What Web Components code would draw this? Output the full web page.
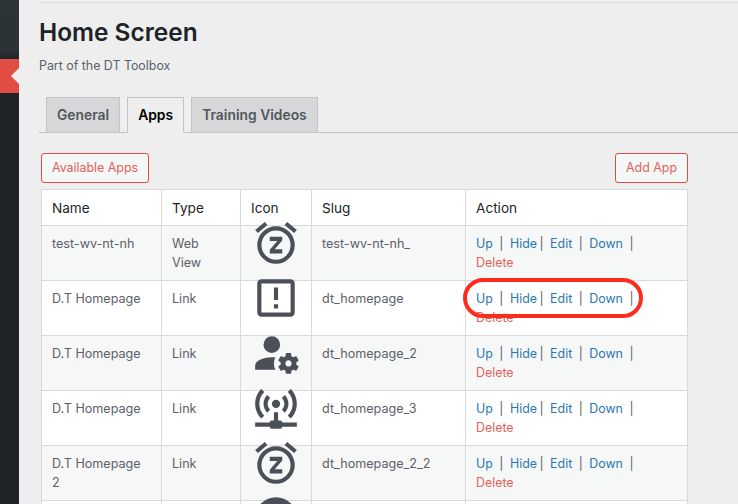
<!DOCTYPE html>
<html>
<head>
<meta charset="utf-8">
<title>Home Screen</title>
<style>
html, body { margin: 0; height: 504px; overflow: hidden; background: #eeeeef; }
body { font-family: Inter, "Liberation Sans", sans-serif; font-size: 12.6px; color: #5b6168; }
</style>
</head>
<body>
<dt-page>
  <dt-sidebar slot="side"></dt-sidebar>
  <dt-heading title="Home Screen" sub="Part of the DT Toolbox"></dt-heading>
  <dt-tabs>
    <dt-tab>General</dt-tab>
    <dt-tab active>Apps</dt-tab>
    <dt-tab>Training Videos</dt-tab>
  </dt-tabs>
  <dt-toolbar>
    <dt-button>Available Apps</dt-button>
    <dt-button>Add App</dt-button>
  </dt-toolbar>
  <dt-table>
    <dt-row header name="Name" type="Type" icon="Icon" slug="Slug"></dt-row>
    <dt-row name="test-wv-nt-nh" type="Web View" icon="alarm" slug="test-wv-nt-nh_"></dt-row>
    <dt-row name="D.T Homepage" type="Link" icon="alert" slug="dt_homepage"></dt-row>
    <dt-row name="D.T Homepage" type="Link" icon="cog" slug="dt_homepage_2"></dt-row>
    <dt-row name="D.T Homepage" type="Link" icon="network" slug="dt_homepage_3"></dt-row>
    <dt-row name="D.T Homepage 2" type="Link" icon="alarm" slug="dt_homepage_2_2"></dt-row>
    <dt-row name="" type="" icon="disc" slug="" blank></dt-row>
  </dt-table>
  <dt-callout></dt-callout>
</dt-page>

<script>
const ICONS = {
  alarm: 'M7.88,3.39L6.6,1.86L2,5.71L3.29,7.24L7.88,3.39M22,5.72L17.4,1.86L16.11,3.39L20.71,7.25L22,5.72M12,4A9,9 0 0,0 3,13A9,9 0 0,0 12,22A9,9 0 0,0 21,13A9,9 0 0,0 12,4M12,20A7,7 0 0,1 5,13A7,7 0 0,1 12,6A7,7 0 0,1 19,13A7,7 0 0,1 12,20M9,11H12.63L9,15.2V17H15V15H11.37L15,10.8V9H9V11Z',
  alert: 'M19,19H5V5H19M19,3H5C3.89,3 3,3.89 3,5V19A2,2 0 0,0 5,21H19A2,2 0 0,0 21,19V5C21,3.89 20.1,3 19,3M11,15H13V17H11V15M11,7H13V13H11V7Z',
  cog: 'M10 4A4 4 0 0 0 6 8A4 4 0 0 0 10 12A4 4 0 0 0 14 8A4 4 0 0 0 10 4M17 12C16.87 12 16.76 12.09 16.74 12.21L16.55 13.53C16.25 13.66 15.96 13.82 15.7 14L14.46 13.5C14.35 13.5 14.22 13.5 14.15 13.63L13.15 15.36C13.09 15.47 13.11 15.6 13.21 15.68L14.27 16.5C14.25 16.67 14.24 16.83 14.24 17C14.24 17.17 14.25 17.33 14.27 17.5L13.21 18.32C13.12 18.4 13.09 18.53 13.15 18.64L14.15 20.37C14.21 20.5 14.34 20.5 14.46 20.5L15.7 20C15.96 20.18 16.24 20.35 16.55 20.47L16.74 21.79C16.76 21.91 16.86 22 17 22H19C19.11 22 19.22 21.91 19.24 21.79L19.43 20.47C19.73 20.34 20 20.18 20.27 20L21.5 20.5C21.63 20.5 21.76 20.5 21.83 20.37L22.83 18.64C22.89 18.53 22.86 18.4 22.77 18.32L21.7 17.5C21.72 17.33 21.74 17.17 21.74 17C21.74 16.83 21.73 16.67 21.7 16.5L22.76 15.68C22.85 15.6 22.88 15.47 22.82 15.36L21.82 13.63C21.76 13.5 21.63 13.5 21.5 13.5L20.27 14C20 13.82 19.73 13.65 19.42 13.53L19.23 12.21C19.22 12.09 19.11 12 19 12H17M10 14C5.58 14 2 15.79 2 18V20H11.68A7 7 0 0 1 11 17A7 7 0 0 1 11.68 14.08C11.13 14.03 10.57 14 10 14M18 15.5C18.83 15.5 19.5 16.17 19.5 17C19.5 17.83 18.83 18.5 18 18.5C17.16 18.5 16.5 17.83 16.5 17C16.5 16.17 17.17 15.5 18 15.5Z',
  network: 'M4.93,2.93C3.12,4.74 2,7.24 2,10C2,12.76 3.12,15.26 4.93,17.07L6.34,15.66C4.89,14.22 4,12.22 4,10C4,7.79 4.89,5.78 6.34,4.34L4.93,2.93M19.07,2.93L17.66,4.34C19.11,5.78 20,7.79 20,10C20,12.22 19.11,14.22 17.66,15.66L19.07,17.07C20.88,15.26 22,12.76 22,10C22,7.24 20.88,4.74 19.07,2.93M7.76,5.76C6.67,6.85 6,8.35 6,10C6,11.65 6.67,13.15 7.76,14.24L9.17,12.83C8.45,12.11 8,11.11 8,10C8,8.89 8.45,7.89 9.17,7.17L7.76,5.76M16.24,5.76L14.83,7.17C15.55,7.89 16,8.89 16,10C16,11.11 15.55,12.11 14.83,12.83L16.24,14.24C17.33,13.15 18,11.65 18,10C18,8.35 17.33,6.85 16.24,5.76M12,8A2,2 0 0,0 10,10A2,2 0 0,0 12,12A2,2 0 0,0 14,10A2,2 0 0,0 12,8M11,14V18H10A1,1 0 0,0 9,19H2V21H9A1,1 0 0,0 10,22H14A1,1 0 0,0 15,21H22V19H15A1,1 0 0,0 14,18H13V14H11Z',
  disc: 'M12,2A10,10 0 0,0 2,12A10,10 0 0,0 12,22A10,10 0 0,0 22,12A10,10 0 0,0 12,2Z'
}

const define = (name, html, setup) => {
  const template = document.createElement('template')
  template.innerHTML = html
  customElements.define(name, class extends HTMLElement {
    constructor () {
      super()
      this.attachShadow({ mode: 'open' })
      this.shadowRoot.appendChild(template.content.cloneNode(true))
    }
    connectedCallback () {
      if (setup) setup(this, this.shadowRoot)
    }
  })
}

define('dt-page', `
  <style>
    :host { display: flex; height: 504px; overflow: hidden; position: relative; }
    #main { flex: 1; min-width: 0; padding-left: 20px; }
    #rule { height: 1px; background: #d9d9db; margin: 2px 0 0 2px; }
  </style>
  <slot name="side"></slot>
  <div id="main">
    <div id="rule"></div>
    <slot></slot>
  </div>
`)

define('dt-sidebar', `
  <style>
    :host {
      display: block;
      flex: 0 0 19px;
      width: 19px;
      background: linear-gradient(to bottom, #2d3438 0, #2c3337 50px, #1d2327 59px);
    }
    #current { margin-top: 59px; height: 34px; background: #e14d43; display: flex; align-items: center; justify-content: flex-end; }
    #arrow { width: 0; height: 0; border: 8px solid transparent; border-left-width: 0; border-right-color: #eeeeef; }
  </style>
  <div id="current"><div id="arrow"></div></div>
`)

define('dt-heading', `
  <style>
    :host { display: block; padding-top: 14px; }
    h1 { margin: 0; font-size: 24.4px; line-height: 31px; font-weight: 600; color: #1d2327; }
    p { margin: 8px 0 0; font-size: 12.4px; line-height: 20px; color: #5b6168; }
  </style>
  <h1></h1>
  <p></p>
`, (el, root) => {
  root.querySelector('h1').textContent = el.getAttribute('title')
  root.querySelector('p').textContent = el.getAttribute('sub')
})

define('dt-tabs', `
  <style>
    :host { display: flex; height: 36px; margin-top: 21px; border-bottom: 1px solid #c3c4c7; box-sizing: border-box; }
  </style>
  <slot></slot>
`)

define('dt-tab', `
  <style>
    :host {
      display: block;
      box-sizing: border-box;
      height: 36px;
      margin-left: 7px;
      padding: 5px 10px;
      border: 1px solid #c3c4c7;
      background: #d7d7d9;
      color: #50575e;
      font-size: 13.85px;
      font-weight: 600;
      line-height: 24px;
      white-space: nowrap;
    }
    :host([active]) { background: #eeeeef; color: #000; border-bottom-color: #eeeeef; }
  </style>
  <slot></slot>
`)

define('dt-toolbar', `
  <style>
    :host { display: flex; justify-content: space-between; width: 647px; margin: 20px 0 0 2px; }
  </style>
  <slot></slot>
`)

define('dt-button', `
  <style>
    :host {
      display: block;
      box-sizing: border-box;
      height: 30px;
      padding: 0 10px;
      border: 1px solid #e14d43;
      border-radius: 3px;
      background: #f6f7f7;
      color: #e4605a;
      font-size: 12.4px;
      line-height: 28px;
      white-space: nowrap;
    }
  </style>
  <slot></slot>
`)

define('dt-table', `
  <style>
    :host { display: block; width: 647px; margin: 6px 0 0 2px; box-sizing: border-box; border: 1px solid #d9d9db; border-right: 0; background: #fff; }
    ::slotted(dt-row:nth-child(even)) { background: #f6f7f7; }
    ::slotted(dt-row[header]), ::slotted(dt-row[blank]) { background: #fff; }
  </style>
  <slot></slot>
`)

define('dt-icon', `
  <style>
    :host { display: block; width: 50px; height: 50px; margin: -8px auto 0; }
    svg { display: block; width: 50px; height: 50px; fill: #4b5058; }
  </style>
  <svg viewBox="0 0 24 24"><path></path></svg>
`, (el, root) => {
  root.querySelector('path').setAttribute('d', ICONS[el.getAttribute('name')])
})

define('dt-actions', `
  <style>
    :host { display: block; color: #5b6168; white-space: nowrap; font-size: 12.4px; }
    a { color: #2c77ae; }
    a.del { color: #e4605a; }
    .sep { margin: 0 6.5px; }
    .sep.tight { margin-left: 2.5px; }
  </style>
  <div><a>Up</a><span class="sep">|</span><a>Hide</a><span class="sep tight">|</span><a>Edit</a><span class="sep">|</span><a>Down</a><span class="sep">|</span></div>
  <div><a class="del">Delete</a></div>
`)

define('dt-row', `
  <style>
    :host {
      display: grid;
      grid-template-columns: 120px 79px 71px 154px 222px;
      height: 55px;
      box-sizing: border-box;
      border-bottom: 1px solid #d9d9db;
      font-size: 12.6px;
      line-height: 19px;
      color: #5b6168;
    }
    :host([header]) { height: 36px; font-size: 13.6px; color: #1d2327; }
    :host([header]) .cell { padding-top: 9px; }
    .cell { box-sizing: border-box; padding: 8px 10px 0; border-right: 1px solid #d9d9db; min-width: 0; }
    .cell.icon { padding: 0; }
    :host([header]) .cell.icon { padding: 9px 10px 0; }
  </style>
  <div class="cell" id="name"></div>
  <div class="cell" id="type"></div>
  <div class="cell icon" id="icon"></div>
  <div class="cell" id="slug"></div>
  <div class="cell" id="action"></div>
`, (el, root) => {
  const header = el.hasAttribute('header')
  for (const key of ['name', 'type', 'slug']) {
    root.getElementById(key).textContent = el.getAttribute(key)
  }
  const iconCell = root.getElementById('icon')
  const actionCell = root.getElementById('action')
  if (header) {
    iconCell.textContent = el.getAttribute('icon')
    actionCell.textContent = 'Action'
    return
  }
  const icon = document.createElement('dt-icon')
  icon.setAttribute('name', el.getAttribute('icon'))
  iconCell.appendChild(icon)
  if (!el.hasAttribute('blank')) actionCell.appendChild(document.createElement('dt-actions'))
})

// the red ring somebody drew on the screenshot, it sits over row 2
define('dt-callout', `
  <style>
    :host {
      position: absolute;
      left: 463px;
      top: 278px;
      width: 180px;
      height: 40px;
      box-sizing: border-box;
      border: 4px solid #fc2d1f;
      border-radius: 20px;
    }
  </style>
`)
</script>
</body>
</html>
